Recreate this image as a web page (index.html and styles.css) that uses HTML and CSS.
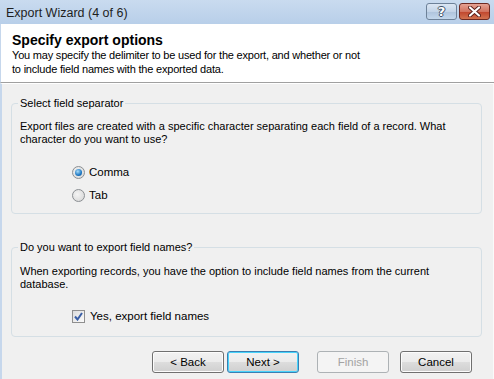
FILE: index.html
```html
<!DOCTYPE html>
<html lang="en">
  <head>
    <meta charset="UTF-8" />
    <title>Export Wizard (4 of 6)</title>
    <link rel="stylesheet" href="styles.css">
  </head>
  <body>
    <div class="window">
      <div class="titlebar">
        <span class="title">Export Wizard (4 of 6)</span>
        <div class="caption-buttons">
          <button class="cap-btn help">?</button>
          <button class="cap-btn close">
            <svg width="13" height="11" viewBox="0 0 13 11">
              <path d="M2 1.5 L11 9.5 M11 1.5 L2 9.5" stroke="#5a1f1a" stroke-width="4" stroke-linecap="round" />
              <path d="M2 1.5 L11 9.5 M11 1.5 L2 9.5" stroke="#fff" stroke-width="2.2" stroke-linecap="round" />
            </svg>
          </button>
        </div>
      </div>

      <div class="header">
        <h1>Specify export options</h1>
        <p>You may specify the delimiter to be used for the export, and whether or not<br>to include field names with the exported data.</p>
      </div>

      <div class="content">
        <fieldset class="group group-sep">
          <legend>Select field separator</legend>
          <p>Export files are created with a specific character separating each field of a record. What character do you want to use?</p>
          <div class="options">
            <label class="option">
              <span class="radio checked"><span class="dot"></span></span>
              Comma
            </label>
            <label class="option">
              <span class="radio"></span>
              Tab
            </label>
          </div>
        </fieldset>

        <fieldset class="group group-names">
          <legend>Do you want to export field names?</legend>
          <p>When exporting records, you have the option to include field names from the current database.</p>
          <div class="options">
            <label class="option check-option">
              <span class="checkbox">
                <svg width="9" height="9" viewBox="0 0 9 9">
                  <path d="M1 4.5 L3.5 7.5 L8 1" fill="none" stroke="#3a5fa6" stroke-width="2" />
                </svg>
              </span>
              Yes, export field names
            </label>
          </div>
        </fieldset>

        <div class="buttons">
          <button class="btn">&lt; Back</button>
          <button class="btn default">Next &gt;</button>
          <button class="btn disabled finish">Finish</button>
          <button class="btn">Cancel</button>
        </div>
      </div>
    </div>
  </body>
</html>
```

FILE: styles.css
```css
* {
  box-sizing: border-box;
  margin: 0;
  padding: 0;
}

body {
  font-family: "Liberation Sans", Arial, sans-serif;
  font-size: 11px;
  color: #000;
  background: #f0f0f0;
}

.window {
  width: 494px;
  height: 379px;
  display: flex;
  flex-direction: column;
  background: #f0f0f0;
  overflow: hidden;
}

.titlebar {
  height: 24px;
  display: flex;
  align-items: center;
  justify-content: space-between;
  padding: 0 4px 0 6px;
  background: linear-gradient(#c9dbef, #b8cfe9);
}

.title {
  font-size: 12.5px;
  color: #1e1e1e;
  padding-top: 2px;
}

.caption-buttons {
  display: flex;
  gap: 2px;
  margin-top: -2px;
}

.cap-btn {
  width: 31px;
  height: 17px;
  border: 1px solid #6d8198;
  border-radius: 3px;
  display: flex;
  align-items: center;
  justify-content: center;
}

.help {
  background: linear-gradient(#dbe6f3 0%, #c3d4e8 50%, #aec3dc 51%, #c3d7ec 100%);
  font-family: "DejaVu Sans", sans-serif;
  font-weight: bold;
  font-size: 13px;
  color: #fff;
  text-shadow: 1px 0 #3d4e66, -1px 0 #3d4e66, 0 1px #3d4e66, 0 -1px #3d4e66;
}

.close {
  border-color: #6e2a22;
  background: linear-gradient(#e6a293 0%, #d2735f 50%, #c0442c 51%, #d2724f 100%);
}

.header {
  height: 59px;
  background: #fff;
  border-left: 1px solid #c6d7ec;
  border-bottom: 1px solid #a0a0a0;
  padding: 8px 0 0 11px;
}

.header h1 {
  font-size: 14px;
  font-weight: bold;
  line-height: 16px;
}

.header p {
  line-height: 14px;
  letter-spacing: -0.2px;
}

.content {
  flex: 1;
  border-left: 2px solid #c6d7ec;
  border-right: 1px solid #fafafa;
  border-top: 1px solid #fff;
  padding: 13px 0 0 9px;
}

.group {
  width: 471px;
  border: 1px solid #d5dfe5;
  border-radius: 4px;
  padding: 10px 8px 0 8px;
}

.group legend {
  padding: 0 2px;
  margin-left: -2px;
  line-height: 13px;
}

.group p {
  line-height: 13px;
  padding-right: 6px;
}

.group-sep {
  height: 117px;
}

.group-names {
  height: 96px;
  margin-top: 27px;
  padding-top: 11px;
}

.options {
  display: flex;
  flex-direction: column;
  gap: 7px;
  padding-left: 52px;
  margin-top: 18px;
}

.group-names .options {
  margin-top: 17px;
}

.option {
  display: flex;
  align-items: center;
  gap: 4px;
  height: 16px;
  font-size: 11.5px;
}

.check-option {
  gap: 5px;
}

.radio {
  width: 13px;
  height: 13px;
  border-radius: 50%;
  border: 1px solid #8b8f93;
  background: radial-gradient(circle at 40% 40%, #f4f4f4, #d4d4d4);
  display: flex;
  align-items: center;
  justify-content: center;
}

.dot {
  width: 7px;
  height: 7px;
  border-radius: 50%;
  background: radial-gradient(circle at 40% 35%, #a9dcf8, #1c77c3 60%, #0d4b8c);
}

.checkbox {
  width: 13px;
  height: 13px;
  border: 1px solid #8f8f8f;
  background: linear-gradient(135deg, #dcdcdc, #fbfbfb);
  display: flex;
  align-items: center;
  justify-content: center;
}

.buttons {
  display: flex;
  gap: 3px;
  padding-left: 141px;
  margin-top: 14px;
}

.btn {
  width: 72px;
  height: 22px;
  font-family: "Liberation Sans", Arial, sans-serif;
  font-size: 11.5px;
  color: #000;
  border: 1px solid #707070;
  border-radius: 3px;
  background: linear-gradient(#f2f2f2 0%, #ebebeb 50%, #dddddd 51%, #cfcfcf 100%);
  box-shadow: inset 0 0 0 1px #fcfcfc;
}

.btn.default {
  border-color: #3c7fb1;
  box-shadow: inset 0 0 0 1px #48d3fb;
}

.btn.finish {
  margin-left: 15px;
  margin-right: 8px;
}

.btn.disabled {
  border-color: #adb2b5;
  background: #f4f4f4;
  color: #a3a3a3;
  box-shadow: none;
}
```
